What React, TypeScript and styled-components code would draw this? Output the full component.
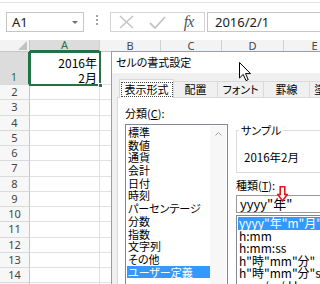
import React from "react";
import styled, { createGlobalStyle } from "styled-components";

const ui = `"Noto Sans CJK JP", "Noto Sans", sans-serif`;
const green = "#217346";

const GlobalStyle = createGlobalStyle`
    html, body {
        margin: 0;
        padding: 0;
        background: #fff;
    }
    body {
        font-family: ${ui};
    }
`;

const Screen = styled.div`
    position: relative;
    width: 320px;
    height: 284px;
    overflow: hidden;
    background: #fff;
    font-family: ${ui};
    font-feature-settings: "palt";
    color: #000;
`;

/* ---------- formula bar ---------- */

const FormulaBar = styled.div`
    display: flex;
    align-items: flex-start;
    height: 38px;
    margin-top: 2px;
    padding: 9px 0 0 6px;
    border-top: 1px solid #e3e3e3;
    box-sizing: border-box;
`;

const NameBox = styled.div`
    width: 78px;
    height: 20px;
    border: 1px solid #c6c6c6;
    box-sizing: border-box;
    display: flex;
    align-items: center;
    justify-content: space-between;
    padding: 0 5px 0 5px;
    font: 13px/18px "Noto Sans", sans-serif;
    color: #222;
`;

const Caret = styled.span`
    width: 0;
    height: 0;
    border-left: 3px solid transparent;
    border-right: 3px solid transparent;
    border-top: 3px solid #6e6e6e;
`;

const Dots = styled.div`
    display: flex;
    flex-direction: column;
    gap: 2px;
    margin: 3px 12px 0 12px;
    span {
        width: 2px;
        height: 2px;
        background: #a4a4a4;
    }
`;

const FxBox = styled.div`
    width: 95px;
    height: 20px;
    border: 1px solid #d4d4d4;
    box-sizing: border-box;
    display: flex;
    align-items: center;
`;

const FxSlot = styled.div`
    width: 31px;
    display: flex;
    justify-content: center;
    align-items: center;
`;

const FxText = styled.span`
    font: italic 16px/18px "Liberation Serif", serif;
    color: #555;
    letter-spacing: -1px;
`;

const FormulaInput = styled.div`
    flex: 1;
    margin-left: 2px;
    height: 20px;
    border: 1px solid #c6c6c6;
    border-right: none;
    box-sizing: border-box;
    padding-left: 7px;
    display: flex;
    align-items: center;
    font: 13px/18px "Noto Sans", sans-serif;
    color: #222;
`;

/* ---------- sheet ---------- */

const Sheet = styled.div`
    display: grid;
    grid-template-columns: 30px 70px 61px 61px 62px 62px;
    grid-template-rows: 12px 33px repeat(14, 15.25px);
`;

const Corner = styled.div`
    background: #f3f3f3;
    border-right: 1px solid #c6c6c6;
    border-bottom: 1px solid #c6c6c6;
    box-sizing: border-box;
    display: flex;
    justify-content: flex-end;
    align-items: flex-end;
    padding: 0 2px 1px 0;
`;

const ColHeader = styled.div<{ $active?: boolean }>`
    background: ${(p) => (p.$active ? "#dcdcdc" : "#f3f3f3")};
    border-right: 1px solid #d0d0d0;
    border-bottom: ${(p) => (p.$active ? `2px solid ${green}` : "1px solid #c6c6c6")};
    box-sizing: border-box;
    color: ${(p) => (p.$active ? green : "#444")};
    font: 11px/11px "Noto Sans", sans-serif;
    display: flex;
    justify-content: center;
    align-items: flex-end;
    overflow: hidden;
`;

const RowHeader = styled.div<{ $active?: boolean; $tall?: boolean }>`
    background: ${(p) => (p.$active ? "#dcdcdc" : "#f7f7f7")};
    border-right: ${(p) => (p.$active ? `2px solid ${green}` : "1px solid #c6c6c6")};
    border-bottom: 1px solid #dadada;
    box-sizing: border-box;
    color: ${(p) => (p.$active ? green : "#444")};
    font: 11px/14px "Noto Sans", sans-serif;
    display: flex;
    justify-content: center;
    align-items: ${(p) => (p.$tall ? "flex-end" : "center")};
`;

const Cell = styled.div`
    border-right: 1px solid #e1e1e1;
    border-bottom: 1px solid #e1e1e1;
    box-sizing: border-box;
`;

const ActiveCell = styled.div`
    position: relative;
    display: flex;
    flex-direction: column;
    align-items: flex-end;
    justify-content: flex-end;
    padding-right: 3px;
    font-size: 12px;
    line-height: 15px;
    &::after {
        content: "";
        position: absolute;
        inset: -1px -1px -1px -1px;
        border: 2px solid ${green};
    }
    &::before {
        content: "";
        position: absolute;
        right: -3px;
        bottom: -3px;
        width: 5px;
        height: 5px;
        background: ${green};
        border: 1px solid #fff;
        box-sizing: border-box;
        z-index: 1;
    }
`;

/* ---------- dialog ---------- */

const Dialog = styled.div`
    position: absolute;
    left: 111px;
    top: 51px;
    width: 232px;
    height: 250px;
    border: 1px solid #7ba3d3;
    background: #f0f0f0;
    font-size: 11px;
    z-index: 2;
`;

const TitleBar = styled.div`
    height: 21px;
    background: #fff;
    padding-left: 4px;
    line-height: 21px;
    font-size: 11px;
`;

const DialogBody = styled.div`
    padding: 6px 0 0 5px;
`;

const TabRow = styled.div`
    display: flex;
    align-items: flex-end;
    padding-left: 2px;
    position: relative;
    z-index: 1;
`;

const Tab = styled.div<{ $active?: boolean; $w: number }>`
    flex: none;
    width: ${(p) => p.$w}px;
    height: ${(p) => (p.$active ? 19 : 17)}px;
    box-sizing: border-box;
    border: 1px solid #d9d9d9;
    border-bottom: ${(p) => (p.$active ? "none" : "1px solid #d9d9d9")};
    border-left: ${(p) => (p.$active ? "1px solid #d9d9d9" : "none")};
    background: ${(p) => (p.$active ? "#fff" : "#f0f0f0")};
    display: flex;
    align-items: center;
    justify-content: center;
    line-height: 13px;
    font-size: 11px;
    white-space: nowrap;
    overflow: hidden;
`;

const FocusLabel = styled.span`
    border: 1px dotted #444;
    padding: 0 3px;
    line-height: 13px;
`;

const Panel = styled.div`
    margin-top: -1px;
    background: #fff;
    border: 1px solid #d9d9d9;
    height: 200px;
    padding: 9px 0 0 7px;
    display: flex;
    gap: 8px;
`;

const LeftCol = styled.div`
    width: 103px;
    flex: none;
`;

const RightCol = styled.div`
    flex: 1;
    padding-top: 17px;
`;

const Label = styled.div`
    position: relative;
    line-height: 12px;
    height: 12px;
    font-size: 11px;
    u {
        text-decoration: underline;
        text-underline-offset: 1px;
    }
`;

const ListBox = styled.div`
    margin-top: 5px;
    height: 170px;
    border: 1px solid #828790;
    padding: 1px;
    display: flex;
`;

const ListItems = styled.div`
    flex: 1;
`;

const ListItem = styled.div<{ $selected?: boolean; $h: number }>`
    height: ${(p) => p.$h}px;
    line-height: ${(p) => p.$h}px;
    padding-left: 1px;
    white-space: nowrap;
    overflow: hidden;
    background: ${(p) => (p.$selected ? "#3399ff" : "transparent")};
    color: ${(p) => (p.$selected ? "#fff" : "#000")};
`;

const ScrollBar = styled.div`
    width: 16px;
    background: #f7f7f7;
    display: flex;
    justify-content: center;
    padding-top: 6px;
    box-sizing: border-box;
`;

const Group = styled.fieldset`
    margin: 0;
    min-width: 0;
    border: 1px solid #dcdcdc;
    padding: 14px 8px 8px 7px;
    legend {
        margin-left: -5px;
        padding: 0 2px;
        line-height: 12px;
        font-size: 11px;
    }
`;

const SampleText = styled.div`
    line-height: 14px;
    font-size: 11.5px;
`;

const KindLabel = styled(Label)`
    margin-top: 6px;
`;

const RedArrow = styled.svg`
    position: absolute;
    left: 41px;
    top: 7px;
`;

const TextBox = styled.div`
    margin-top: 4px;
    height: 18px;
    border: 1px solid #9a9a9a;
    border-right: none;
    box-sizing: border-box;
    padding-left: 3px;
    font-size: 13px;
    line-height: 16px;
    white-space: nowrap;
`;

const FormatList = styled.div`
    margin-top: 2px;
    height: 80px;
    border: 1px solid #828790;
    border-right: none;
    padding: 1px 0 0 1px;
    font-size: 12px;
`;

const Cursor = styled.svg`
    position: absolute;
    left: 239px;
    top: 62px;
    z-index: 3;
`;

const columns = ["A", "B", "C", "D", "E"];
const rows = Array.from({ length: 14 }, (_, i) => i + 2);

const categories = [
    "標準",
    "数値",
    "通貨",
    "会計",
    "日付",
    "時刻",
    "パーセンテージ",
    "分数",
    "指数",
    "文字列",
    "その他",
    "ユーザー定義",
];

const formats = [
    'yyyy"年"m"月"',
    "h:mm",
    "h:mm:ss",
    'h"時"mm"分"',
    'h"時"mm"分"ss"秒"',
    "yyyy/m/d h:mm",
];

const tabs = [
    { label: "配置", w: 44 },
    { label: "フォント", w: 46 },
    { label: "罫線", w: 46 },
    { label: "塗りつぶし", w: 60 },
];

const App: React.FC = () => {
    return (
        <Screen>
            <GlobalStyle />
            <FormulaBar>
                <NameBox>
                    A1
                    <Caret />
                </NameBox>
                <Dots>
                    <span />
                    <span />
                    <span />
                </Dots>
                <FxBox>
                    <FxSlot>
                        <svg width="15" height="14" viewBox="0 0 15 14">
                            <path d="M1 1 L14 13 M14 1 L1 13" stroke="#c4c4c4" strokeWidth="1.6" fill="none" />
                        </svg>
                    </FxSlot>
                    <FxSlot>
                        <svg width="17" height="13" viewBox="0 0 17 13">
                            <path d="M1 7 L6 12 L16 1" stroke="#c4c4c4" strokeWidth="1.8" fill="none" />
                        </svg>
                    </FxSlot>
                    <FxSlot>
                        <FxText>fx</FxText>
                    </FxSlot>
                </FxBox>
                <FormulaInput>2016/2/1</FormulaInput>
            </FormulaBar>

            <Sheet>
                <Corner>
                    <svg width="9" height="9" viewBox="0 0 9 9">
                        <path d="M9 0 L9 9 L0 9 Z" fill="#c2c2c2" />
                    </svg>
                </Corner>
                {columns.map((c) => (
                    <ColHeader key={c} $active={c === "A"}>
                        {c}
                    </ColHeader>
                ))}

                <RowHeader $active $tall>
                    1
                </RowHeader>
                <ActiveCell>
                    <span>2016年</span>
                    <span>2月</span>
                </ActiveCell>
                {columns.slice(1).map((c) => (
                    <Cell key={c} />
                ))}

                {rows.map((r) => (
                    <React.Fragment key={r}>
                        <RowHeader>{r}</RowHeader>
                        {columns.map((c) => (
                            <Cell key={c} />
                        ))}
                    </React.Fragment>
                ))}
            </Sheet>

            <Dialog>
                <TitleBar>セルの書式設定</TitleBar>
                <DialogBody>
                    <TabRow>
                        <Tab $active $w={55}>
                            <FocusLabel>表示形式</FocusLabel>
                        </Tab>
                        {tabs.map((t) => (
                            <Tab key={t.label} $w={t.w}>
                                {t.label}
                            </Tab>
                        ))}
                    </TabRow>
                    <Panel>
                        <LeftCol>
                            <Label>
                                分類(<u>C</u>):
                            </Label>
                            <ListBox>
                                <ListItems>
                                    {categories.map((c) => (
                                        <ListItem key={c} $h={12.7} $selected={c === "ユーザー定義"}>
                                            {c}
                                        </ListItem>
                                    ))}
                                </ListItems>
                                <ScrollBar>
                                    <svg width="7" height="4" viewBox="0 0 7 4">
                                        <path d="M0.5 3.5 L3.5 0.5 L6.5 3.5" stroke="#a0a0a0" fill="none" />
                                    </svg>
                                </ScrollBar>
                            </ListBox>
                        </LeftCol>
                        <RightCol>
                            <Group>
                                <legend>サンプル</legend>
                                <SampleText>2016年2月</SampleText>
                            </Group>
                            <KindLabel>
                                種類(<u>T</u>):
                                <RedArrow width="11" height="16" viewBox="0 0 11 16">
                                    <path
                                        d="M3.2 0.8 H7.8 V8.5 H10.2 L5.5 15 L0.8 8.5 H3.2 Z"
                                        fill="#fff"
                                        stroke="#e8141b"
                                        strokeWidth="1.6"
                                        strokeLinejoin="miter"
                                    />
                                </RedArrow>
                            </KindLabel>
                            <TextBox>yyyy"年"</TextBox>
                            <FormatList>
                                {formats.map((f, i) => (
                                    <ListItem key={f} $h={12.5} $selected={i === 0}>
                                        {f}
                                    </ListItem>
                                ))}
                            </FormatList>
                        </RightCol>
                    </Panel>
                </DialogBody>
            </Dialog>

            <Cursor width="13" height="20" viewBox="0 0 13 20">
                <path
                    d="M0.5 0.5 L0.5 16 L4.2 12.4 L7 18.6 L9.2 17.6 L6.5 11.6 L11.5 11.6 Z"
                    fill="#fff"
                    stroke="#000"
                    strokeWidth="1"
                    strokeLinejoin="round"
                />
            </Cursor>
        </Screen>
    );
};

export default App;
